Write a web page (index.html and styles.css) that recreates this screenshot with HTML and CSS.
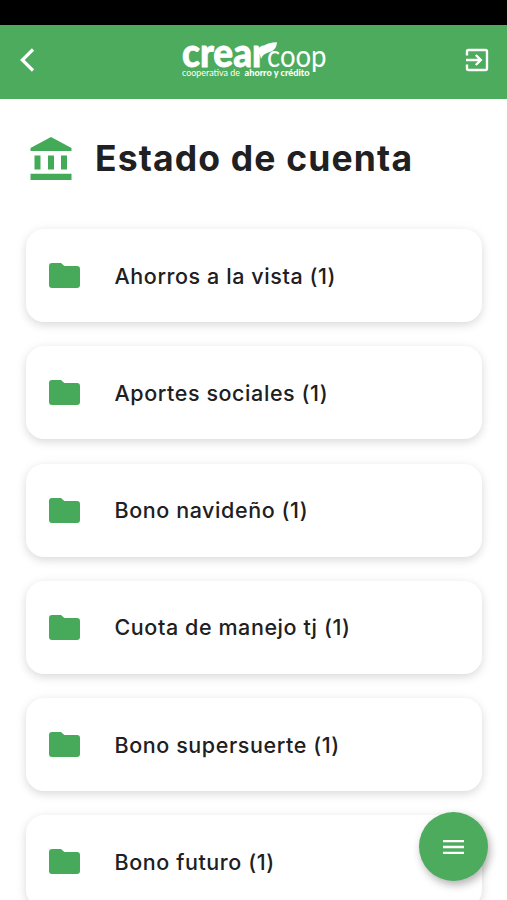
FILE: index.html
```html
<!DOCTYPE html>
<html lang="es">
<head>
<meta charset="utf-8">
<title>Estado de cuenta</title>
<link rel="stylesheet" href="styles.css">
</head>
<body>
<svg class="symbols" width="0" height="0" aria-hidden="true">
  <symbol id="folder" viewBox="0 0 31 25"><path d="M3 0h9l3.3 3H28a3 3 0 0 1 3 3v16a3 3 0 0 1-3 3H3a3 3 0 0 1-3-3V3a3 3 0 0 1 3-3z"/></symbol>
</svg>
<div class="status-bar"></div>
<header class="app-bar">
  <svg class="back" viewBox="0 0 15 24"><path d="M13 1.5 2.3 12 13 22.5"/></svg>
  <svg class="logo" viewBox="0 0 148 42">
    <g class="logo-text">
      <text class="brand-bold" x="1" y="28" textLength="84" lengthAdjust="spacingAndGlyphs">crear</text>
      <text class="brand-light" x="86" y="28" textLength="59.500" lengthAdjust="spacingAndGlyphs">coop</text>
      <text class="tag" x="1" y="36.500" textLength="58" lengthAdjust="spacingAndGlyphs">cooperativa de</text>
      <text class="tag tag-bold" x="63.500" y="36.500" textLength="65" lengthAdjust="spacingAndGlyphs">ahorro y crédito</text>
    </g>
    <path d="M79 16C79 8 84 3.500 96 3.300C95.500 10 92 12.500 86 14C83 15 81 17 80 20z"/>
  </svg>
  <svg class="exit" viewBox="0 0 24 24"><path d="M2 7.500V3.500A1.500 1.500 0 0 1 3.500 2h17A1.500 1.500 0 0 1 22 3.500v17a1.500 1.500 0 0 1-1.500 1.500h-17A1.500 1.500 0 0 1 2 20.500v-4M1 12h14.500M10.800 7 15.800 12l-5 5"/></svg>
</header>
<main>
  <div class="heading">
    <svg class="bank" viewBox="0 0 42 43"><path d="M21 0 41.500 11v3H.5v-3zM4.500 18.500h6v14h-6zM18 18.500h6v14h-6zM31 18.500h6v14h-6zM.5 36.800h41V43H.5z"/></svg>
    <h1>Estado de cuenta</h1>
  </div>
  <div class="accounts">
    <div class="card"><svg class="folder"><use href="#folder"/></svg><span>Ahorros a la vista (1)</span></div>
    <div class="card"><svg class="folder"><use href="#folder"/></svg><span>Aportes sociales (1)</span></div>
    <div class="card"><svg class="folder"><use href="#folder"/></svg><span>Bono navideño (1)</span></div>
    <div class="card"><svg class="folder"><use href="#folder"/></svg><span>Cuota de manejo tj (1)</span></div>
    <div class="card"><svg class="folder"><use href="#folder"/></svg><span>Bono supersuerte (1)</span></div>
    <div class="card"><svg class="folder"><use href="#folder"/></svg><span>Bono futuro (1)</span></div>
  </div>
</main>
<button class="fab" aria-label="Menú"><svg viewBox="0 0 21 14"><path d="M0 1.200h21M0 7h21M0 12.800h21"/></svg></button>
</body>
</html>
```
FILE: styles.css
```css
* { box-sizing: border-box; }
body {
  margin: 0;
  height: 900px;
  overflow: hidden;
  background: #fff;
  color: #202022;
  font-family: Inter, "Liberation Sans", sans-serif;
}
svg { display: block; }
.symbols { position: absolute; }
.status-bar { height: 25px; background: #000; }
.app-bar {
  height: 73.500px;
  padding: 0 18px 4px 20px;
  display: flex;
  align-items: center;
  justify-content: space-between;
  background: #4cab5c;
}
.back { width: 15px; height: 24px; fill: none; stroke: #fff; stroke-width: 3.2; }
.logo { width: 148px; height: 42px; margin-left: 10px; fill: #fff; overflow: visible; }
.logo-text { font-family: Lato, sans-serif; }
.brand-bold { font-size: 40px; font-weight: 900; stroke: #fff; stroke-width: 0.8; }
.brand-light { font-size: 31px; font-weight: 400; }
.tag { font-size: 9.5px; }
.tag-bold { font-weight: 900; }
.exit { width: 24px; height: 24px; fill: none; stroke: #fff; stroke-width: 2.4; }
.heading {
  height: 129.500px;
  padding: 0 29px 10px 30px;
  display: flex;
  align-items: center;
  gap: 23px;
}
.bank { width: 42px; height: 43px; flex: none; fill: #43aa57; }
h1 {
  margin: 0;
  font-size: 35.5px;
  font-weight: 700;
  letter-spacing: 1.15px;
  white-space: nowrap;
}
.accounts { padding: 1px 25px 0 26px; display: flex; flex-direction: column; gap: 24.3px; }
.card {
  height: 93px;
  padding-left: 22.500px;
  flex: none;
  display: flex;
  align-items: center;
  gap: 35px;
  border-radius: 18px;
  background: #fff;
  box-shadow: 0 3px 9px rgba(0, 0, 0, 0.12), 0 2px 16px rgba(0, 0, 0, 0.04);
  font-size: 21.5px;
  font-weight: 540;
  letter-spacing: 0.58px;
  white-space: nowrap;
}
.folder { width: 31px; height: 25px; fill: #47aa5a; }
.fab {
  position: fixed;
  left: 418.500px;
  top: 812px;
  width: 69px;
  height: 69px;
  padding: 0;
  border: 0;
  border-radius: 50%;
  display: grid;
  place-items: center;
  background: #4cab5c;
  box-shadow: 2px 4px 9px rgba(0, 0, 0, 0.3);
}
.fab svg { width: 21px; height: 14px; stroke: #fff; stroke-width: 2.3; }
```
